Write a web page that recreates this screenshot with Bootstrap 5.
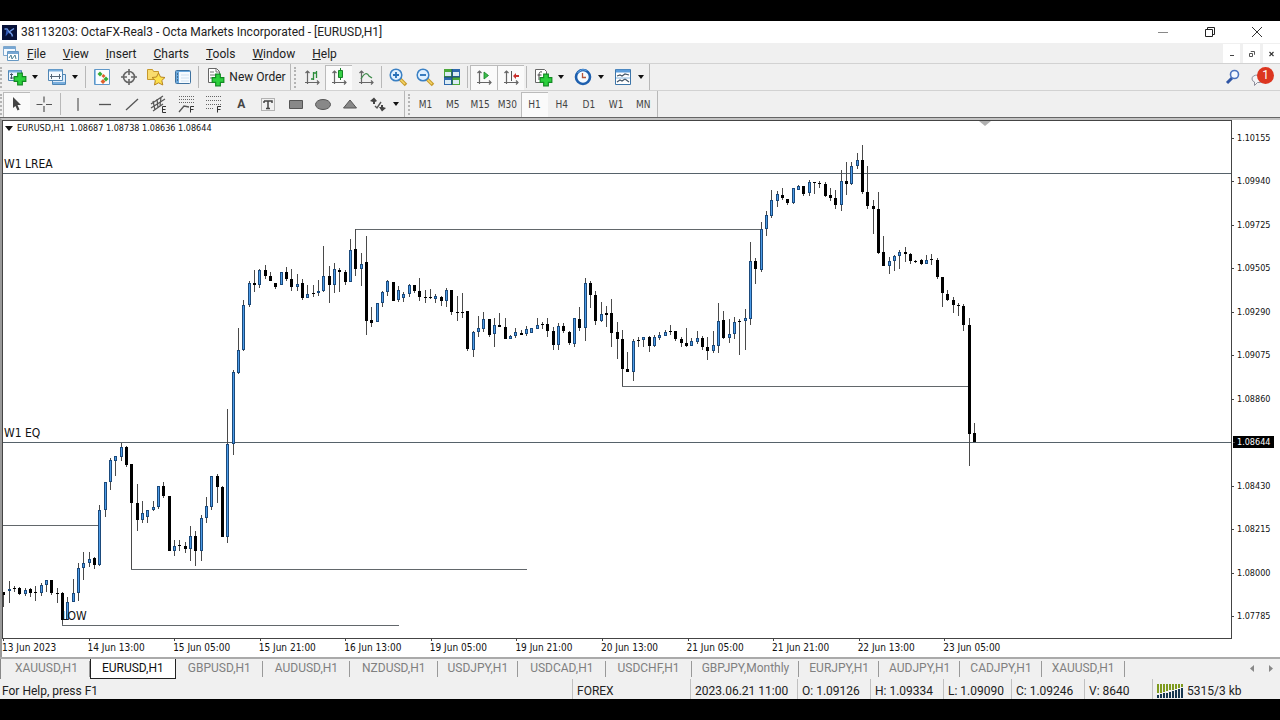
<!DOCTYPE html>
<html lang="en">
<head>
<meta charset="utf-8">
<meta name="viewport" content="width=device-width, initial-scale=1">
<title>38113203: OctaFX-Real3 - Octa Markets Incorporated - [EURUSD,H1]</title>
<link rel="stylesheet" href="https://cdn.jsdelivr.net/npm/bootstrap@5.3.0/dist/css/bootstrap.min.css">
<style>
  body { background: #000; font-family: Roboto, "Open Sans", sans-serif; font-size: 12px; line-height: 16px; color: #222; padding: 21px 0; }
  .app { background: #f0f0f0; }
  .title-bar { height: 22px; background: #fff; }
  .app-logo { margin: 0 4px 0 2px; }
  .win-btn { width: 47px; height: 22px; color: #222; }
  .menu-bar { height: 21px; border-bottom: 1px solid #d2d2d2; }
  .menu-bar a { color: #222; margin-right: 17px; padding-top: 2px; }
  .menu-logo { margin: 0 8px 0 3px; }
  .child-btn { width: 17px; height: 19px; background: #fff; color: #444; margin-left: 3px; }
  .tools { height: 27px; border-bottom: 1px solid #d2d2d2; }
  .tools-last { height: 26px; border-bottom: 0; }
  .grip { width: 3px; height: 21px; border-left: 2px dotted #b4b4b4; }
  .grip-mid { width: 7px; border-left: 0; }
  .grip-mid::after { content: ""; border-left: 2px dotted #b4b4b4; height: 21px; display: block; margin-left: 3px; }
  .group { height: 26px; border-right: 1px solid #b8b8b8; }
  .draw-group { width: 341px; }
  .time-group { width: 246px; }
  .tool { height: 25px; width: 27px; padding: 0; border: 0; border-radius: 0; background: transparent; font: inherit; color: #444; }
  .tool.on { background: #fafafa; box-shadow: inset 1px 1px 0 #bbb; }
  .tool-drop { width: 40px; padding-left: 4px; }
  .new-order { width: 89px; color: #222; }
  .tool-sep { width: 1px; height: 22px; margin: 0 2px; background: #b8b8b8; }
  .sep-wide { margin: 0 3px; }
  .caret { border: 3px solid transparent; border-top: 4px solid #111; border-bottom: 0; }
  .tool-drop .caret { margin-left: 5px; }
  .frame-name { font: 10px "DejaVu Sans Condensed", "DejaVu Sans", sans-serif; color: #444; }
  .alerts { padding-right: 7px; }
  .notice { top: 2px; right: 6px; width: 17px; height: 17px; background: #dc3620; color: #fff; line-height: 17px; }
  .chart { background: #fff; border-top: 1px solid #666; border-bottom: 2px solid #aaa; }
  .chart-rim { border-top: 2px solid #c4c4c4; border-left: 2px solid #9a9a9a; }
  .plot { border: 1px solid #444; }
  .plot svg { inset: 0; }
  .tiny { font: 9px/12px "DejaVu Sans Condensed", "DejaVu Sans", sans-serif; color: #111; }
  .quote { top: 1px; left: 2px; }
  .quote .caret { margin-right: 4px; border-width: 5px 4px 0; }
  .mark-label { left: 1px; font: 12px/16px "DejaVu Sans Condensed", "DejaVu Sans", sans-serif; color: #111; }
  .shift { top: 0; left: 80%; border: 6px solid transparent; border-top: 5px solid #b0b0b0; border-bottom: 0; margin-left: -6px; }
  .price-axis { width: 48px; padding: 12px 0 17px; }
  .price-axis span { padding-left: 5px; position: relative; }
  .price-axis span::before { content: ""; position: absolute; left: 0; top: 6px; width: 2px; height: 1px; background: #444; }
  .price-axis .now { background: #000; color: #fff; padding-left: 4px; margin-left: 1px; margin-right: 6px; }
  .time-axis { height: 18px; display: grid; grid-template-columns: repeat(12, 16fr) 38fr; margin-right: 48px; font-size: 10px; }
  .time-axis span { position: relative; padding-top: 3px; white-space: nowrap; }
  .time-axis span::before { content: ""; position: absolute; left: 1px; top: -1px; width: 1px; height: 3px; background: #444; }
  .tabs { height: 20px; padding-left: 2px; border-left: 1px solid #888; }
  .tabs a { color: #808080; height: 19px; padding: 1px 12px 0; position: relative; white-space: nowrap; }
  .tabs a.yen { padding: 1px 10px 0; }
  .tabs a::after { content: ""; position: absolute; right: 0; top: 2px; height: 16px; width: 1px; background: #999; }
  .tabs a.current { background: #fff; color: #111; border: 1px solid #222; border-top: 0; height: 20px; padding: 1px 11px 0; }
  .tabs a.current::after { display: none; }
  .status { height: 20px; padding-left: 2px; }
  .status > div { border-left: 1px solid #c0c0c0; padding: 4px 0 0 4px; white-space: nowrap; }
  .status > div:first-child { border: 0; padding-left: 0; }
  .c-date { width: 118px; } .c-open { width: 107px; } .c-val { width: 73px; } .c-low { width: 68px; } .c-net { width: 128px; }
  .scroll-arrow { width: 19px; }
</style>
</head>
<body class="min-vh-100 d-flex flex-column">
<svg class="d-none" aria-hidden="true">
  <symbol id="plus" viewBox="0 0 12 12"><path d="M4 1h4v3h3v4H8v3H4V8H1V4h3z" fill="#2bd03c" stroke="#118a22"/></symbol>
  <symbol id="axes" viewBox="0 0 20 20"><path d="M5.500 17V4M3 15.500h14M3.500 6l2-2 2 2M15 13.500l2 2-2 2" fill="none" stroke="#666" stroke-width="1.200"/></symbol>
</svg>
<div class="app flex-fill d-flex flex-column overflow-hidden">
  <header class="title-bar d-flex align-items-center">
    <svg class="app-logo" width="15" height="15" viewBox="0 0 15 15"><path d="M0 0h15v15H0z" fill="#061138"/><path d="M2.500 4h2.500l2 3 5-3.500M7 7.500c2 0 3 1.500 3.500 4" fill="none" stroke="#6f9be6" stroke-width="1.500"/><path d="M4.500 4l2.500 3.500-3.500 4z" fill="#2f58b4"/></svg>
    <span class="flex-fill">38113203: OctaFX-Real3 - Octa Markets Incorporated - [EURUSD,H1]</span>
    <button class="btn p-0 border-0 win-btn" aria-label="Minimize"><svg width="12" height="12" class="d-block mx-auto"><path d="M1 6.500h10" stroke="#888"/></svg></button>
    <button class="btn p-0 border-0 win-btn" aria-label="Restore"><svg width="12" height="12" class="d-block mx-auto"><path d="M1.500 3.500h7v7h-7zM3.500 3V1.500h7v7H9" fill="none" stroke="#222"/></svg></button>
    <button class="btn p-0 border-0 win-btn" aria-label="Close"><svg width="12" height="12" class="d-block mx-auto"><path d="M1 1l10 10M11 1L1 11" stroke="#333"/></svg></button>
  </header>

  <nav class="menu-bar d-flex align-items-center">
    <svg class="menu-logo" width="16" height="16" viewBox="0 0 16 16"><path d="M.5 1.500h12v9H.5z" fill="#f4f9ff" stroke="#7ea7cc"/><path d="M1 3h11" stroke="#78a7d3" stroke-width="2"/><path d="M4.500 6.500h11v9h-11z" fill="#fff" stroke="#6698c3"/><path d="M5 8h10" stroke="#78a7d3" stroke-width="2"/><path d="M6 13l2-3 1 4 3-4 1 4" fill="none" stroke="#4f8194"/></svg>
    <a class="text-decoration-none" href="#"><u>F</u>ile</a>
    <a class="text-decoration-none" href="#"><u>V</u>iew</a>
    <a class="text-decoration-none" href="#"><u>I</u>nsert</a>
    <a class="text-decoration-none" href="#"><u>C</u>harts</a>
    <a class="text-decoration-none" href="#"><u>T</u>ools</a>
    <a class="text-decoration-none" href="#"><u>W</u>indow</a>
    <a class="text-decoration-none me-auto" href="#"><u>H</u>elp</a>
    <button class="btn rounded-0 p-0 border-0 child-btn" aria-label="Minimize chart"><svg width="9" height="9" class="d-block mx-auto"><path d="M3 6.500h4" stroke="#444"/></svg></button>
    <button class="btn rounded-0 p-0 border-0 child-btn" aria-label="Restore chart"><svg width="9" height="9" class="d-block mx-auto"><path d="M2.500 4.500h3v3h-3zM4 3V2.500h3.500v3H7" fill="none" stroke="#555"/></svg></button>
    <button class="btn rounded-0 p-0 border-0 child-btn" aria-label="Close chart"><svg width="9" height="9" class="d-block mx-auto"><path d="M2.500 3l4 4M6.500 3l-4 4" stroke="#333" stroke-width="1.200"/></svg></button>
  </nav>

  <div class="tools d-flex align-items-center" role="toolbar" aria-label="Standard">
    <span class="grip"></span>
    <div class="group d-flex align-items-center">
      <button class="tool tool-drop d-flex align-items-center" aria-label="New chart"><svg width="20" height="20" viewBox="0 0 20 20"><path d="M1.500 3.500h13v10h-13z" fill="#eef6ff" stroke="#4f86b5"/><path d="M2 4.500h12" stroke="#79aedd" stroke-width="2"/><path d="M4.500 12V7M3 8l1.500-1.500L6 8M3 11h6" fill="none" stroke="#456"/><use href="#plus" x="6" y="5" width="14" height="14"/></svg><i class="caret"></i></button>
      <button class="tool tool-drop d-flex align-items-center" aria-label="Profiles"><svg width="20" height="20" viewBox="0 0 20 20"><path d="M5.500 7.500h13v10h-13z" fill="#dcebfa" stroke="#4f86b5"/><path d="M6 16h12" stroke="#79aedd" stroke-width="2"/><path d="M1.500 2.500h14v11h-14z" fill="#f5faff" stroke="#4f86b5"/><path d="M2 3.500h13" stroke="#79aedd" stroke-width="2"/><path d="M3 9.500h11M4.500 7v5M12.500 7v5" stroke="#567"/></svg><i class="caret"></i></button>
      <span class="tool-sep"></span>
      <button class="tool" aria-label="Market watch"><svg width="20" height="20" viewBox="0 0 20 20"><path d="M2.500 2.500h15v15h-15z" fill="#fbfdff" stroke="#5e97c8"/><path d="M8 4.500l2.500 2.500L8 9.500 5.500 7z" fill="#36ad36"/><path d="M11.500 7l2 2-2 2-2-2zM11 12l2.500 2.500L11 17l-2.500-2.500z" fill="#e0602c"/><path d="M14 9.500l2.500 2.500-2.500 2.500-2.500-2.500z" fill="#36ad36"/><path d="M3.500 3v14" stroke="#93c2ea"/></svg></button>
      <button class="tool" aria-label="Data window"><svg width="20" height="20" viewBox="0 0 20 20"><circle cx="10" cy="10" r="5.500" fill="none" stroke="#666" stroke-width="1.600"/><path d="M10 2v6M10 12v6M2 10h6M12 10h6" stroke="#666" stroke-width="1.600"/></svg></button>
      <button class="tool" aria-label="Navigator"><svg width="20" height="20" viewBox="0 0 20 20"><path d="M1.500 2.500h5l1 2h5v8h-11z" fill="#f9dc6e" stroke="#c6982b"/><path d="M12.500 6l2 4 4.500.5-3.200 3 1 4.500-4.300-2.200L8.500 18l.8-4.500-3.300-3 4.500-.5z" fill="#fde14d" stroke="#b88520"/></svg></button>
      <button class="tool" aria-label="Terminal"><svg width="20" height="20" viewBox="0 0 20 20"><rect x="2.500" y="3.500" width="15" height="13" rx="1" fill="#f6fbff" stroke="#3d719f"/><path d="M3 4h3v12H3z" fill="#6ba8dc"/><path d="M6 4.500h11" stroke="#6ba8dc"/><path d="M8 8h8M8 11h8M8 14h8" stroke="#d0e1f0"/><path d="M4 7h1M4 10h1M4 13h1" stroke="#234"/></svg></button>
      <span class="tool-sep"></span>
      <button class="tool new-order d-flex align-items-center justify-content-center text-nowrap"><svg class="me-1" width="20" height="20" viewBox="0 0 20 20"><path d="M3.500 1.500h8l3 3v11h-11z" fill="#fff" stroke="#666"/><path d="M11 2v3h3M5 5h4M5 8h7M5 11h5" fill="none" stroke="#777"/><use href="#plus" x="6" y="6" width="14" height="14"/></svg>New Order</button>
    </div>
    <span class="grip grip-mid"></span>
    <div class="group d-flex align-items-center">
      <button class="tool" aria-label="Bar chart"><svg width="20" height="20"><use href="#axes"/><path d="M11.500 5v8M9 12h2M12 6h2.500M14.500 4v7" fill="none" stroke="#2b8d3a" stroke-width="1.300"/></svg></button>
      <button class="tool on" aria-label="Candlesticks"><svg width="20" height="20"><use href="#axes"/><path d="M11.500 1v12" stroke="#168326"/><path d="M9.500 3.500h4v7h-4z" fill="#35cf45" stroke="#168326"/></svg></button>
      <button class="tool" aria-label="Line chart"><svg width="20" height="20"><use href="#axes"/><path d="M5 12q5-9 8-3l3 2" fill="none" stroke="#3c8a48" stroke-width="1.300"/></svg></button>
      <span class="tool-sep"></span>
      <button class="tool" aria-label="Zoom in"><svg width="20" height="20" viewBox="0 0 20 20"><path d="M12 12l6 6" stroke="#c79a2b" stroke-width="3.500"/><path d="M12 12l5 5" stroke="#f5d567" stroke-width="1.500"/><circle cx="8" cy="8" r="5.800" fill="#dff0ff" stroke="#3a80c4" stroke-width="1.500"/><path d="M5 8h6M8 5v6" stroke="#2870b8" stroke-width="1.800"/></svg></button>
      <button class="tool" aria-label="Zoom out"><svg width="20" height="20" viewBox="0 0 20 20"><path d="M12 12l6 6" stroke="#c79a2b" stroke-width="3.500"/><path d="M12 12l5 5" stroke="#f5d567" stroke-width="1.500"/><circle cx="8" cy="8" r="5.800" fill="#dff0ff" stroke="#3a80c4" stroke-width="1.500"/><path d="M5 8h6" stroke="#2870b8" stroke-width="1.800"/></svg></button>
      <button class="tool" aria-label="Tile windows"><svg width="20" height="20" viewBox="0 0 20 20"><path d="M2 2h8v8H2zM10 10h8v8h-8z" fill="#4ca83b"/><path d="M10 2h8v8h-8zM2 10h8v8H2z" fill="#2f69ad"/><path d="M3 5h6v4H3zM11 5h6v4h-6zM3 13h6v4H3zM11 13h6v4h-6z" fill="#dcecf4"/><path d="M2 10h16M10 2v16" stroke="#1b4d68"/></svg></button>
      <span class="tool-sep"></span>
      <button class="tool on" aria-label="Auto scroll"><svg width="20" height="20"><use href="#axes"/><path d="M10 5v7l4.500-3.500z" fill="#39bd4a" stroke="#168326" stroke-width=".8"/></svg></button>
      <button class="tool on" aria-label="Chart shift"><svg width="20" height="20"><use href="#axes"/><path d="M10.500 4v10" stroke="#555"/><path d="M12 9l3-3v2h3v2h-3v2z" fill="#c9302c"/></svg></button>
      <span class="tool-sep"></span>
      <button class="tool tool-drop d-flex align-items-center" aria-label="Indicators"><svg width="20" height="20" viewBox="0 0 20 20"><path d="M2.500 2.500h9l2 2v11h-11z" fill="#fff" stroke="#666"/><path d="M9 5q-3-1-3 3v5M4.500 8h4" fill="none" stroke="#444"/><use href="#plus" x="6" y="6" width="14" height="14"/></svg><i class="caret"></i></button>
      <button class="tool tool-drop d-flex align-items-center" aria-label="Periods"><svg width="20" height="20" viewBox="0 0 20 20"><circle cx="10" cy="10" r="7" fill="#f4faff" stroke="#1d5fae" stroke-width="2.600"/><path d="M4.500 6a7.500 7.500 0 0 1 9-2.500" fill="none" stroke="#6eb1ee"/><path d="M9.500 6v4.500H13" fill="none" stroke="#b5543a" stroke-width="1.300"/></svg><i class="caret"></i></button>
      <button class="tool tool-drop d-flex align-items-center" aria-label="Templates"><svg width="20" height="20" viewBox="0 0 20 20"><path d="M2.500 2.500h15v15h-15z" fill="#fff" stroke="#3c75a9"/><path d="M3 4h14" stroke="#5b9cda" stroke-width="3"/><path d="M4 9l3-1 2 1 3-2 4 1M4 15l3-2 2 1 3-2 4 3" fill="none" stroke="#456" stroke-width="1.200"/><path d="M3 11h14" stroke="#8ab8df"/></svg><i class="caret"></i></button>
    </div>
    <div class="alerts ms-auto position-relative d-flex align-items-center">
      <button class="tool" aria-label="Search"><svg width="16" height="16" viewBox="0 0 16 16"><path d="M7 9l-5 5" stroke="#2f55a4" stroke-width="3"/><circle cx="9.500" cy="5.500" r="4" fill="#f4f8ff" stroke="#4b72be" stroke-width="1.600"/></svg></button>
      <button class="tool" aria-label="Messages"><svg width="20" height="20" viewBox="0 0 20 20"><path d="M8 8q-6 0-6 4 0 2 2.500 3v3.500l3-3q7 .5 8-3.500" fill="#f4f4f6" stroke="#8f8f9c"/></svg></button>
      <span class="notice position-absolute rounded-circle text-center">1</span>
    </div>
  </div>

  <div class="tools tools-last d-flex align-items-center" role="toolbar" aria-label="Drawing">
    <span class="grip"></span>
    <button class="tool on" aria-label="Cursor"><svg width="20" height="20"><path d="M6 3l8 8H10.500l2 4.500-2 1-2-4.500L6 14z" fill="#444"/></svg></button>
    <button class="tool" aria-label="Crosshair"><svg width="20" height="20"><path d="M10 2.500v6M10 12v6M2.500 10.500h6M12 10.500h6" stroke="#555" stroke-width="1.200"/></svg></button>
    <span class="tool-sep sep-wide"></span>
    <div class="group draw-group d-flex align-items-center">
      <button class="tool flex-fill" aria-label="Vertical line"><svg width="20" height="20"><path d="M10 4v13" stroke="#666" stroke-width="1.300"/></svg></button>
      <button class="tool flex-fill" aria-label="Horizontal line"><svg width="20" height="20"><path d="M4 10.500h12" stroke="#555" stroke-width="1.300"/></svg></button>
      <button class="tool flex-fill" aria-label="Trend line"><svg width="20" height="20"><path d="M4 16L16 5" stroke="#555" stroke-width="1.300"/></svg></button>
      <button class="tool flex-fill" aria-label="Equidistant channel"><svg width="20" height="20"><path d="M2 10L14 2M2 14L16 5M4 17L14 10M4 7l2 9M8 5l1 9M12 3l-1 9" stroke="#555" stroke-width="1.200"/><path d="M17 12.500h-3.500v6H17M13.500 15.500h3" fill="none" stroke="#333"/></svg></button>
      <button class="tool flex-fill" aria-label="Fibonacci fan"><svg width="20" height="20"><path d="M2 2.500h16M2 5.500h16M2 8.500h16" stroke="#666" stroke-dasharray="1 1"/><path d="M2 18l5-6 5 1" fill="none" stroke="#555" stroke-width="1.300"/><path d="M17 12.500h-3.500v6M13.500 15.500h3" fill="none" stroke="#333"/></svg></button>
      <button class="tool flex-fill" aria-label="Fibonacci retracement"><svg width="20" height="20"><path d="M2 2.500h15M2 6.500h15M2 10.500h15M2 14.500h8" stroke="#666" stroke-dasharray="1 1"/><path d="M17 12.500h-3.500v6M13.500 15.500h3" fill="none" stroke="#333"/></svg></button>
      <button class="tool flex-fill fw-bold" aria-label="Text">A</button>
      <button class="tool flex-fill" aria-label="Text label"><svg width="20" height="20"><path d="M3.500 4.500h13v12h-13z" fill="none" stroke="#777" stroke-dasharray="1 1"/><path d="M6 7h8v2M6 9V7M10 7v8M8 14.500h4" fill="none" stroke="#444" stroke-width="1.500"/></svg></button>
      <button class="tool flex-fill" aria-label="Rectangle"><svg width="20" height="20"><path d="M3.500 6.500h13v8h-13z" fill="#888" stroke="#555"/></svg></button>
      <button class="tool flex-fill" aria-label="Ellipse"><svg width="20" height="20"><ellipse cx="10" cy="10.500" rx="7.500" ry="5" fill="#888" stroke="#555"/></svg></button>
      <button class="tool flex-fill" aria-label="Triangle"><svg width="20" height="20"><path d="M10 6l6.500 8h-13z" fill="#888" stroke="#555"/></svg></button>
      <button class="tool tool-drop d-flex align-items-center" aria-label="Arrows"><svg width="20" height="20"><path d="M2 7l4-3.500L9 7 7 8v2H5V8zM11 13h2v-2h2v2l3 1-4 3.500z" fill="#444"/><path d="M7 12l2 2 4-6" fill="none" stroke="#555" stroke-width="1.400"/></svg><i class="caret"></i></button>
    </div>
    <span class="grip grip-mid"></span>
    <div class="group time-group d-flex align-items-center" role="group" aria-label="Timeframe">
      <button class="tool frame-name flex-fill">M1</button><button class="tool frame-name flex-fill">M5</button><button class="tool frame-name flex-fill">M15</button><button class="tool frame-name flex-fill">M30</button><button class="tool frame-name flex-fill on">H1</button><button class="tool frame-name flex-fill">H4</button><button class="tool frame-name flex-fill">D1</button><button class="tool frame-name flex-fill">W1</button><button class="tool frame-name flex-fill">MN</button>
    </div>
  </div>

  <main class="chart flex-fill d-flex flex-column">
    <div class="chart-rim flex-fill d-flex flex-column">
      <div class="flex-fill d-flex">
        <div class="plot flex-fill position-relative overflow-hidden">
          <svg id="bars" class="position-absolute w-100 h-100" viewBox="0 0 1228 517" preserveAspectRatio="none" shape-rendering="crispEdges" role="img" aria-label="EURUSD hourly candlesticks">
            <g fill="none" stroke="#62676b">
              <path d="M0 404.500h96M128.500 344v104.500H524M59.500 490v14.500H396M352.500 122v-13.500H759M619.500 240v25.500H967"/>
              <path d="M0 52.500h1228M0 321.500h1228" stroke="#56626a"/>
            </g>
          </svg>
          <div class="quote tiny position-absolute d-flex align-items-center"><i class="caret"></i><span>EURUSD,H1&nbsp; 1.08687 1.08738 1.08636 1.08644</span></div>
          <i class="shift position-absolute"></i>
          <span class="mark-label position-absolute" style="top:6.800%">W1 LREA</span>
          <span class="mark-label position-absolute" style="top:58.800%">W1 EQ</span>
          <span class="mark-label position-absolute" style="top:94.200%;left:4.800%">LOW</span>
        </div>
        <div class="price-axis tiny d-flex flex-column justify-content-between">
          <span>1.10155</span><span>1.09940</span><span>1.09725</span><span>1.09505</span><span>1.09290</span><span>1.09075</span><span>1.08860</span><span class="now">1.08644</span><span>1.08430</span><span>1.08215</span><span>1.08000</span><span>1.07785</span>
        </div>
      </div>
      <div class="time-axis tiny">
        <span>13 Jun 2023</span><span>14 Jun 13:00</span><span>15 Jun 05:00</span><span>15 Jun 21:00</span><span>16 Jun 13:00</span><span>19 Jun 05:00</span><span>19 Jun 21:00</span><span>20 Jun 13:00</span><span>21 Jun 05:00</span><span>21 Jun 21:00</span><span>22 Jun 13:00</span><span>23 Jun 05:00</span>
      </div>
    </div>
  </main>

  <nav class="tabs d-flex" aria-label="Charts">
    <a class="text-decoration-none" href="#">XAUUSD,H1</a><a class="text-decoration-none current" href="#" aria-current="page">EURUSD,H1</a><a class="text-decoration-none" href="#">GBPUSD,H1</a><a class="text-decoration-none" href="#">AUDUSD,H1</a><a class="text-decoration-none" href="#">NZDUSD,H1</a><a class="text-decoration-none yen" href="#">USDJPY,H1</a><a class="text-decoration-none" href="#">USDCAD,H1</a><a class="text-decoration-none" href="#">USDCHF,H1</a><a class="text-decoration-none yen" href="#">GBPJPY,Monthly</a><a class="text-decoration-none yen" href="#">EURJPY,H1</a><a class="text-decoration-none yen" href="#">AUDJPY,H1</a><a class="text-decoration-none yen" href="#">CADJPY,H1</a><a class="text-decoration-none yen" href="#">XAUUSD,H1</a>
    <button class="btn p-0 border-0 d-flex justify-content-center align-items-center scroll-arrow ms-auto" aria-label="Previous tabs"><svg width="6" height="8"><path d="M5 0v7L1 3.500z" fill="#888"/></svg></button>
    <button class="btn p-0 border-0 d-flex justify-content-center align-items-center scroll-arrow" aria-label="Next tabs"><svg width="6" height="8"><path d="M1 0v7l4-3.500z" fill="#888"/></svg></button>
  </nav>

  <footer class="status d-flex">
    <div class="flex-fill">For Help, press F1</div>
    <div class="c-date">FOREX</div>
    <div class="c-open">2023.06.21 11:00</div>
    <div class="c-val">O: 1.09126</div>
    <div class="c-val">H: 1.09334</div>
    <div class="c-low">L: 1.09090</div>
    <div class="c-val">C: 1.09246</div>
    <div class="c-low">V: 8640</div>
    <div class="c-net d-flex align-items-center"><svg class="me-1" width="26" height="14" viewBox="0 0 26 14"><path d="M1 0v9M4 0v9M7 0v8M10 0v7M13 0v6M16 0v6M19 0v5M22 0v4M25 0v3" stroke="#7e9a1e" stroke-width="2"/><path d="M1 11v3M4 10v4M7 9v5M10 9v5M13 8v6M16 7v7M19 6v8M22 5v9M25 4v10" stroke="#16364f" stroke-width="2"/></svg>5315/3 kb</div>
  </footer>
</div>

<script>
  // Candles by session. Each row: kind (u = up, d = down), body top, body bottom, high, low,
  // in thirds of a chart unit below the session's base.
  const sessions = [
    { base: 299, rows: `d 515 525 515 560,u 507 514 483 550,d 504 507 498 515,d 504 521 500 525,u 510 521 504 528,d 507 520 504 530,d 517 519 498 544,u 495 518 488 528,u 480 496 480 516,d 480 519 480 524,d 518 520 505 550,d 519 600 515 613,u 545 600 532 600,u 519 545 478 545,u 445 519 430 544,u 430 445 397 480,u 418 430 397 442,d 415 436 411 448,u 269 436 255 438,u 187 269 187 292,u 120 185 114 209,u 109 122 109 167,u 81 110 68 124,d 81 134 78 142,d 133 249 133 448,d 249 299 191 332,u 279 299 243 308,u 270 290 270 308,u 262 271 243 272,u 199 262 199 266,d 198 228 187 234,d 228 394 228 394,u 378 392 360 408,d 375 378 361 392,d 377 388 367 398,u 348 388 318 423,d 348 394 334 437,u 295 394 284 423,u 259 295 232 310,u 169 260 169 270,d 169 202 161 250,d 202 350 199 352,u 73 352 -33 370,u -144 73 -150 104` },
    { base: 99, rows: `u 390 460 325 462,u 256 389 240 394,u 189 256 182 260,d 189 194 150 215,u 150 194 146 203,d 150 168 136 178,d 167 182 156 182,d 190 200 190 208,u 157 196 157 196,d 157 178 142 182,d 178 201 146 212,u 192 201 163 212,d 190 234 178 240,u 223 234 195 234,d 219 222 194 230,u 213 220 181 228,u 168 214 78 216,d 169 195 139 250,u 148 196 129 220,d 150 156 145 215,d 157 186 151 194,u 90 185 57 186,d 87 146 27 167,u 132 147 100 198,d 126 302 49 346,d 301 308 261 322,u 249 307 249 307,u 216 250 212 260,u 184 215 180 227,d 186 242 186 242,u 211 240 198 246,u 222 233 217 245,u 195 221 192 230,d 195 214 195 220,d 213 232 174 242,d 231 233 210 250,d 231 233 207 236,u 229 236 222 248,d 230 243 228 258,u 211 244 204 262,d 211 275 211 286,d 275 277 228 303,d 276 279 220 293,d 273 388 273 393,u 336 390 334 410` },
    { base: 139, rows: `u 205 216 168 232,u 178 206 156 216,d 177 224 177 232,u 195 222 175 261,d 195 201 159 202,d 201 237 175 237,u 228 237 225 238,u 217 228 204 235,d 218 224 210 224,u 207 222 197 228,u 205 218 205 218,u 195 206 174 208,d 192 196 186 208,d 192 213 175 231,d 212 254 200 270,u 198 255 190 270,d 197 214 190 220,d 215 250 212 256,u 175 252 175 262,d 177 204 140 212,u 70 204 53 244,d 69 105 63 143,d 106 183 92 194,u 163 184 126 186,d 160 164 139 201,d 159 219 116 262,d 217 237 185 297,d 236 327 210 378,d 326 335 277 336,u 243 335 236 362,d 239 242 231 262,u 230 240 230 262,d 230 258 228 276,u 230 258 224 262,u 225 234 217 240,u 216 228 210 228,d 213 216 196 224,d 213 238 213 244,d 237 249 231 262,d 249 258 205 262,u 244 258 235 258,u 235 245 214 252` },
    { base: 9, rows: `d 625 652 618 660,d 651 662 621 690,u 645 662 603 670,u 573 647 519 668,d 571 624 543 626,u 612 625 568 640,u 577 612 562 626,d 573 577 568 674,u 563 574 537 661,u 394 566 337 584,d 393 418 384 461,u 297 419 277 425,u 256 298 243 318,u 211 257 180 265,u 192 212 184 230,d 194 203 174 210,d 206 218 206 224,u 175 218 175 221,u 169 179 165 181,d 168 191 168 199,u 156 190 149 198,d 157 159 156 192,d 158 161 153 173,d 162 197 155 200,d 196 204 175 214,d 204 224 179 236,u 153 226 120 242,d 153 163 97 196,u 108 162 96 166,u 90 108 69 118,d 91 185 45 192,d 185 228 108 238,d 228 236 210 312,d 236 368 186 371,d 367 407 319 408,u 393 407 381 432,u 378 394 374 422,u 365 378 359 416,d 366 371 350 397,d 371 394 370 402,d 392 394 390 400,d 391 401 388 405,u 389 401 376 402,d 387 390 371 405,d 389 442 383 446,d 441 490 441 530,d 492 509 480 514,d 509 524 500 550,d 524 527 519 558,d 527 585 522 602,d 585 912 564 1008,d 909 936 879 936` }
  ];
  const chart = document.getElementById('bars');
  const add = (x, y, w, h, fill) => {
    const r = document.createElementNS('http://www.w3.org/2000/svg', 'rect');
    for (const [k, v] of Object.entries({ x, y, width: w, height: h, fill })) r.setAttribute(k, v);
    chart.appendChild(r);
  };
  let n = 0;
  for (const { base, rows } of sessions) {
    for (const row of rows.split(',')) {
      const [kind, ...v] = row.trim().split(' ');
      const [top, bottom, high, low] = v.map(t => Math.round(base + t / 3));
      const x = Math.round(0.2 + n * 16 / 3);
      const h = Math.max(1, bottom - top);
      add(x, high, 1, low - high, '#4a4a4a');
      if (kind === 'u') {
        add(x - 1, top, 3, h, '#1b4a7c');
        if (h > 2) add(x, top + 1, 1, h - 2, '#4c9be8');
      } else add(x - 1, top, 3, h, '#000');
      n++;
    }
  }
</script>
<script src="https://cdn.jsdelivr.net/npm/bootstrap@5.3.0/dist/js/bootstrap.bundle.min.js"></script>
</body>
</html>
